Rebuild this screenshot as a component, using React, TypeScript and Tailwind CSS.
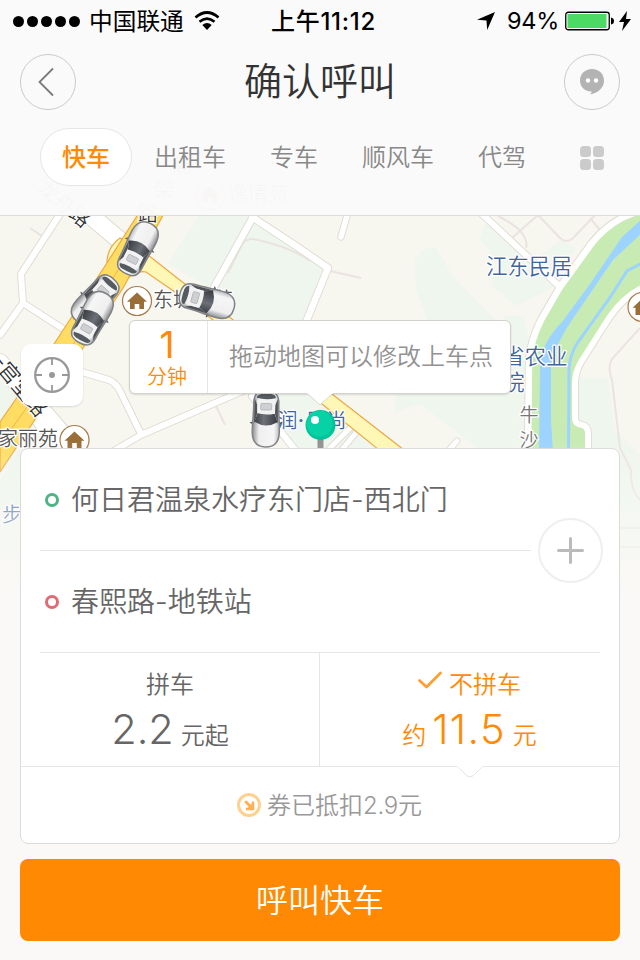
import React from "react";

const FONT =
  "font-[Inter,'Noto_Sans_CJK_SC',sans-serif]";

function Car({ x, y, r }: { x: number; y: number; r: number }) {
  return (
    <g transform={`translate(${x} ${y}) rotate(${r})`}>
      <path d="M-11.5 -7 L-16.500 -3.500 L-11.500 -2.500Z M11.500 -7 L16.500 -3.500 L11.500 -2.500Z" fill="#55565a" />
      <path
        d="M0 -28 C7.500 -28 13 -24 13.500 -14 C13.700 -4 12.300 6 12.500 16 C12.500 24 9.500 28 0 28 C-9.500 28 -12.500 24 -12.500 16 C-12.300 6 -13.700 -4 -13.500 -14 C-13 -24 -7.500 -28 0 -28Z"
        fill="url(#carBody)"
        stroke="#808285"
        strokeWidth="1.500"
      />
      <path d="M-12 -5 L-9 5 L-9 14 L-11.500 20Z M12 -5 L9 5 L9 14 L11.500 20Z" fill="#505357" />
      <path d="M-11.500 -3 Q0 -10 11.500 -3 L8.500 5.500 Q0 3.500 -8.500 5.500Z" fill="url(#glass)" />
      <path d="M-8.800 6 Q0 4 8.800 6 L9 19 Q0 21 -9 19Z" fill="#f2f2f3" />
      <rect x="-5.500" y="9" width="11" height="6.500" rx="1" fill="#cfd0d3" stroke="#a9abae" strokeWidth=".7" />
      <path d="M-9.500 21 Q0 18.500 9.500 21 Q9.500 24.500 5 25 Q0 25.500 -5 25 Q-9.500 24.500 -9.500 21Z" fill="#565a61" />
    </g>
  );
}

function House({ x, y }: { x: number; y: number }) {
  return (
    <g transform={`translate(${x} ${y})`}>
      <circle r="14.500" fill="#fff" stroke="#a67c4c" strokeWidth="1.200" />
      <path d="M0 -8.500 L10 .8 H7 V8 H2.300 V3 H-2.300 V8 H-7 V.8 H-10Z" fill="#996f37" />
    </g>
  );
}

const ROADS: [string, number][] = [
  ["M64 208 L21 274 L23 303 L0 335", 6],
  ["M23 303 L74 336", 6],
  ["M84 210 L124 244", 17],
  ["M253 217 L233 253 L212 291", 6.5],
  ["M252 217 L296 246 L328 268 L306 322", 6.5],
  ["M348 212 L341 237", 5.5],
  ["M82 372 L109 380 Q116 383 120 391 L141 434", 6],
  ["M112 452 L141 435 L245 390", 6],
  ["M252 396 L297 452", 6],
  ["M326 452 L350 428", 5],
  ["M340 452 L360 428", 5],
  ["M481 213 L560 287", 6],
  ["M634 213 Q610 221 592 243 L560 287 L541 320 Q530 342 529 362 L528 452", 6.5],
  ["M644 287 Q624 296 609 318 L581 362 Q575 372 575 384 L575 418 Q575 424 582 425 Q588 426 588 434 V452", 6],
  ["M449 450 L457 441", 5],
  ["M32 404 L68 446", 24],
  ["M0 362 L28 398", 16],
];

function MapCanvas() {
  return (
    <svg width="640" height="960" viewBox="0 0 640 960" className="block [grid-area:1/1]">
      <defs>
        <linearGradient id="carBody" x1="0" x2="1" y1="0" y2="0">
          <stop offset="0" stopColor="#b9bbbe" />
          <stop offset=".2" stopColor="#f6f6f7" />
          <stop offset=".75" stopColor="#efeff0" />
          <stop offset="1" stopColor="#8b8d90" />
        </linearGradient>
        <linearGradient id="glass" x1="0" x2="1" y1="0" y2="0">
          <stop offset="0" stopColor="#383b41" />
          <stop offset=".6" stopColor="#6d7177" />
          <stop offset="1" stopColor="#3d4046" />
        </linearGradient>
        <linearGradient id="fade" x1="0" x2="0" y1="0" y2="1">
          <stop offset="0" stopColor="#faf9f7" stopOpacity="0" />
          <stop offset="1" stopColor="#faf9f7" />
        </linearGradient>
      </defs>
      <rect width="640" height="960" fill="#f7f6ef" />
      <g fill="#eff6ee">
        <path d="M200 214 L168 264 L213 289 L240 325 H306 L328 268 L252 215Z" />
        <path d="M415 262 Q420 246 435 247 L452 275 L500 325 L505 316 H524 L530 345 V450 H480 L420 404 L395 412 L396 395 L428 322 L416 290Z" />
        <path d="M484 225 L492 220 L558 285 L516 306 L490 284 L500 262 L480 240Z M540 255 L560 240 L576 249 L560 280Z" />
        <path d="M575 378 H608 L615 430 L640 455 V560 H575Z" />
        <path d="M250 393 H320 L385 448 H290Z" />
        <path d="M0 380 L20 395 L0 425Z M0 480 L22 445 V560 H0Z" />
      </g>
      <g fill="none" stroke="#ebe3e0" strokeWidth="2">
        <path d="M228 273 L243 243 Q248 237 258 240 Q290 247 310 261 M330 271 L361 278" />
        <path d="M498 216 Q530 232 526 248 M512 238 L538 215 L560 238 Q568 245 576 235 L596 214 M590 218 L600 230" />
        <path d="M640 328 L612 359 Q607 367 612 380 L620 448 L631 470 Q630 490 640 500 M30 228 L42 236 M216 406 L225 425" />
      </g>
      <g fill="none" strokeLinecap="round" strokeLinejoin="round">
        {ROADS.map(([d, w]) => (
          <path key={d} d={d} stroke="#dedbd1" strokeWidth={w + 1.8} />
        ))}
      </g>
      <path d="M644 214 Q612 222 594 245 L562 290 L543 323 Q533 343 532 362 L531 452 H587 V434 Q587 428 582 427 Q572 427 573 418 L573 382 L580 361 L608 315 Q622 294 644 286Z" fill="#c8ebb4" />
      <path d="M644 217 L622 237 L590 284 L562 322 Q540 344 540 368 L539 452 H553 L551 420 V365 Q555 345 572 320 L613 260 L644 231Z" fill="#9dd3ff" />
      <path d="M644 262 L627 271 L609 299 L578 342 Q570 354 569 368 L568.500 452" fill="none" stroke="#9dd3ff" strokeWidth="3" />
      <g fill="none" stroke="#fff" strokeLinecap="round" strokeLinejoin="round">
        {ROADS.map(([d, w]) => (
          <path key={d} d={d} strokeWidth={w} />
        ))}
      </g>
      <g stroke="#eba946" strokeWidth="1.200">
        <path d="M120 238 Q106 248 107 266 L128 278 Q138 270 146 272 L175 292 L220 325 L322 404 L379 450 L404 450 L332 394 L240 325 L181 281 L148 255Z" fill="#fff7b5" />
        <path d="M142 208 L105 266 L54 344 L0 422 V472 L40 412 L83 348 L123 288 L167 208Z" fill="#ffdd63" />
        <path d="M154 210 L112 280 L73 345 L25 410 L0 445" fill="none" strokeWidth=".8" />
      </g>
      <g className="font-['Noto_Sans_CJK_SC',sans-serif] font-[350]" stroke="#fff" strokeWidth="2.500" strokeLinejoin="round" style={{ paintOrder: "stroke" }}>
        <g fill="#555" fontSize="20">
          <text x="153" y="307">东城逸苑</text>
          <text x="-2" y="446">家丽苑</text>
          <text x="519.5" y="422" fontSize="19" fill="#777">牛</text>
          <text x="519.5" y="446.500" fontSize="19" fill="#777">沙</text>
          <text x="228" y="201">逸情苑</text>
          <text transform="translate(37 190) rotate(40)" fill="#333">龙舟路</text>
          <text transform="translate(-16.400 354) rotate(50)" fontSize="21" fill="#333">一官堂路</text>
          <text x="138" y="221" fill="#333">路</text>
          <text x="154" y="197">架</text>
          <text x="172" y="173">高</text>
        </g>
        <g fill="#3f659f" fontSize="21.500">
          <text x="486" y="273.500">江东民居</text>
          <text x="503" y="364">省农业</text>
          <text x="503" y="389.500">院</text>
          <text x="277" y="428" fontSize="20.500">润</text>
          <circle cx="301" cy="420.500" r="1.500" stroke="none" />
          <text x="305.500" y="428" fontSize="20.500">风尚</text>
          <text x="2" y="522" fontSize="20">步</text>
        </g>
      </g>
      <House x={137} y={301} />
      <House x={74.5} y={440} />
      <House x={642.5} y={307} />
      <House x={210} y={195} />
      <Car x={138} y={248.5} r={27} />
      <Car x={95} y={300} r={222} />
      <Car x={92.5} y={318} r={29} />
      <Car x={207} y={301} r={106} />
      <Car x={266} y={419} r={181} />
      <rect x="317.500" y="436" width="6" height="14" fill="#929292" />
      <circle cx="320.500" cy="425" r="15" fill="#00c39a" />
      <circle cx="319.500" cy="423.500" r="13" fill="#06d2a5" />
      <circle cx="315" cy="420" r="4" fill="#fff" />
      <rect y="440" width="640" height="160" fill="url(#fade)" />
      <path d="M620 528 H640 M620 547 H640" stroke="#eceae7" />
      <rect y="600" width="640" height="360" fill="#faf9f7" />
    </svg>
  );
}

function StatusBar() {
  return (
    <div className="grid h-10 grid-cols-[1fr_auto_1fr] items-center pt-[2px] text-[24px] leading-none text-black">
      <div className="flex items-center pl-[13px]">
        <div className="flex gap-[3px]">
          {[0, 1, 2, 3, 4].map((i) => (
            <span key={i} className="size-[11px] rounded-full bg-black" />
          ))}
        </div>
        <span className="ml-[9px] pt-[2px] text-[23.7px] leading-6">中国联通</span>
        <svg className="ml-[10px]" width="26" height="20" viewBox="0 0 26 20">
          <path d="M1.500 6.500 Q13 -3.500 24.500 6.500 M5.500 10.800 Q13 4.500 20.500 10.800" fill="none" stroke="#000" strokeWidth="2.700" />
          <path d="M8.300 14 Q13 10 17.700 14 L13 19Z" />
        </svg>
      </div>
      <div className="pl-[7px] pt-[1px] font-medium tracking-[0.7px]">上午11:12</div>
      <div className="flex items-center justify-end pr-[9px]">
        <svg width="18" height="18" viewBox="0 0 18 18">
          <path d="M18 0 L10.200 18 L9.500 8.500 L0 7.800Z" />
        </svg>
        <span className="ml-[12px] text-[23.5px] tracking-[-0.3px]">94%</span>
        <svg className="ml-[6px]" width="50" height="20" viewBox="0 0 50 20">
          <rect x=".75" y="1.250" width="43.500" height="17.500" rx="2.500" fill="#fff" stroke="#000" strokeWidth="1.300" />
          <rect x="2.500" y="3" width="39" height="14" fill="#4cd964" />
          <path d="M46 6.500 Q49 7 49 10 Q49 13 46 13.500Z" />
        </svg>
        <svg className="ml-[4px]" width="12" height="20" viewBox="0 0 12 20">
          <path d="M8 0 L0 11 H5 L3 20 L12 8 H7Z" />
        </svg>
      </div>
    </div>
  );
}

const TABS = ["快车", "出租车", "专车", "顺风车", "代驾"];

function Header() {
  return (
    <header className="flex h-[216px] flex-col border-b border-[#dcdcda] bg-[#fafafa]/98">
      <StatusBar />
      <div className="mt-[14px] flex h-14 items-center justify-between px-5">
        <button className="flex size-14 items-center justify-center rounded-full border border-[#cacaca]">
          <svg width="54" height="54" viewBox="0 0 54 54" fill="none" stroke="#7a7a7a" strokeWidth="1.800">
            <path d="M32 13.500 L18.500 27 L32 40.500" />
          </svg>
        </button>
        <h1 className="-mt-[2px] text-[38px] font-[350] leading-[56px] text-[#333]">确认呼叫</h1>
        <button className="flex size-14 items-center justify-center rounded-full border border-[#cacaca]">
          <svg width="24" height="26" viewBox="0 0 24 26">
            <path d="M12 0 C19 0 24 5 24 11.500 C24 19 18 24 10 25.500 Q12 24 11.500 22.500 C5 22.500 0 18 0 11.500 C0 5 5 0 12 0Z" fill="#b3b3b3" />
            <circle cx="8" cy="11.500" r="2.200" fill="#fff" />
            <circle cx="16" cy="11.500" r="2.200" fill="#fff" />
          </svg>
        </button>
      </div>
      <nav className="mt-[18px] flex h-[58px] items-center pl-10 text-[24px] leading-[58px] text-[#888]">
        {TABS.map((t, i) => (
          <span
            key={t}
            className={
              i === 0
                ? "flex h-[58px] items-center rounded-full border border-[#e6e6e6] bg-white px-[21px] pt-[2px] font-medium text-[#ff8a05]"
                : "px-[22px] pt-[2px] font-[350]"
            }
          >
            {t}
          </span>
        ))}
        <span className="ml-8 mt-[2px] grid grid-cols-2 gap-[2px]">
          {[0, 1, 2, 3].map((i) => (
            <i key={i} className="size-[11px] rounded-[3.5px] bg-[#cbcbcb]" />
          ))}
        </span>
      </nav>
    </header>
  );
}

function MapOverlay() {
  return (
    <section className="relative h-[232px]">
      <button className="absolute left-[21px] top-[128px] flex size-[62px] items-center justify-center rounded-[10px] bg-white shadow-[0_1px_2px_rgba(0,0,0,0.12)]">
        <svg width="38" height="38" viewBox="0 0 38 38" fill="none" stroke="#999">
          <circle cx="19" cy="19" r="16.800" strokeWidth="2.300" />
          <path d="M19 2 V9 M19 29 V36 M2 19 H9 M29 19 H36" strokeWidth="1.800" />
          <circle cx="19" cy="19" r="3" fill="#999" stroke="none" />
        </svg>
      </button>
      <div className="absolute left-[129px] top-[104px] flex h-[74px] w-[382px] rounded-md border border-[#d2d2cd] bg-white shadow-[0_1px_2px_rgba(0,0,0,0.12)]">
        <div className="flex w-[78px] flex-col items-center border-r border-[#e6e6e6] pr-[3px] text-[#ff8a05]">
          <span className="mt-[4px] text-[37px] leading-[40px]">1</span>
          <span className="text-[20px] font-[350] leading-6">分钟</span>
        </div>
        <span className="pl-[21px] text-[24px] font-[350] leading-[72px] text-[#929292]">拖动地图可以修改上车点</span>
        <svg className="absolute left-[177px] top-[71px]" width="27" height="14" viewBox="0 0 27 14">
          <path d="M0 1 L13 13 L26 1" fill="#fff" stroke="#d8d8d3" />
          <path d="M0 0 H27 L26 1.500 H0Z" fill="#fff" />
        </svg>
      </div>
    </section>
  );
}

function OrderCard() {
  return (
    <section className="mx-5 flex h-[396px] flex-col rounded-lg border border-[#dcdcdc] bg-white text-[#666]">
      <div className="relative mx-[19px]">
        <div className="mr-[69px] flex h-[102px] items-center border-b border-[#e6e6e6] pl-[5px]">
          <i className="size-[14px] rounded-full border-[3.5px] border-[#4fb484]" />
          <span className="ml-3 text-[28px] font-[350] leading-[102px]">何日君温泉水疗东门店-西北门</span>
        </div>
        <div className="flex h-[102px] items-center border-b border-[#e6e6e6] pl-[5px]">
          <i className="size-[14px] rounded-full border-[3.5px] border-[#e16a73]" />
          <span className="ml-3 text-[28px] font-[350] leading-[102px]">春熙路-地铁站</span>
        </div>
        <button className="absolute right-[-3px] top-[69px] flex size-[65px] items-center justify-center rounded-full border-2 border-[#efefef] bg-white">
          <svg width="27" height="27" viewBox="0 0 27 27" stroke="#bbb" strokeWidth="3" strokeLinecap="round">
            <path d="M13.500 1.500 V25.500 M1.500 13.500 H25.500" />
          </svg>
        </button>
      </div>
      <div className="relative flex h-[114px] border-b border-[#e6e6e6] text-[24px]">
        <div className="flex w-[299px] flex-col items-center border-r border-[#e6e6e6]">
          <span className="mt-[14px] font-[350] leading-9">拼车</span>
          <div className="flex items-baseline leading-[53px]">
            <span className="text-[41.5px] font-[350]">2.2</span>
            <span className="ml-[7px] font-[350]">元起</span>
          </div>
        </div>
        <div className="flex flex-1 flex-col items-center text-[#ff8a05]">
          <div className="mt-[14px] flex font-[350] leading-9">
            <svg className="mr-[7px] mt-[4px]" width="24" height="20" viewBox="0 0 24 20" fill="none" stroke="#ff9d33" strokeWidth="2.700" strokeLinecap="round" strokeLinejoin="round">
              <path d="M1.500 9.500 L8.500 16 L22.500 2" />
            </svg>
            不拼车
          </div>
          <div className="flex items-baseline leading-[53px]">
            <span className="font-[350]">约</span>
            <span className="ml-[6px] text-[41.5px] font-[350] tracking-[1.3px]">11.5</span>
            <span className="ml-[7px] font-[350]">元</span>
          </div>
        </div>
        <svg className="absolute left-[436px] top-[112px]" width="26" height="13" viewBox="0 0 26 13">
          <path d="M0 0 H26 V1.500 L16 11 Q13 12.500 10 11 L0 1.500Z" fill="#fff" />
          <path d="M.5 1.500 L10 11 Q13 12.500 16 11 L25.500 1.500" fill="none" stroke="#e6e6e6" />
        </svg>
      </div>
      <div className="flex flex-1 items-center justify-center pl-[19px] text-[24px] text-[#999]">
        <svg className="mr-[6px]" width="24" height="24" viewBox="0 0 24 24" fill="none">
          <circle cx="12" cy="12" r="10.500" stroke="#ffd191" strokeWidth="3" />
          <path d="M9 9 L13 13" stroke="#ffb054" strokeWidth="3" strokeLinecap="round" />
          <path d="M16 8.500 V16 H9" stroke="#ffb054" strokeWidth="2.500" />
          <path d="M16.500 9 V16.500 H9Z" fill="#ffb054" />
        </svg>
        <span className="pt-[2px] font-[350]">券已抵扣<span className="tracking-[-0.2px]">2.9</span>元</span>
      </div>
    </section>
  );
}

export default function App() {
  return (
    <main className={`grid h-[960px] w-[640px] overflow-hidden ${FONT}`}>
      <MapCanvas />
      <div className="z-10 flex flex-col [grid-area:1/1]">
        <Header />
        <MapOverlay />
        <OrderCard />
        <button className="mx-5 mt-[15px] h-[82px] rounded-lg bg-[#ff8903] pt-px text-[32px] font-[350] text-white">呼叫快车</button>
      </div>
    </main>
  );
}
